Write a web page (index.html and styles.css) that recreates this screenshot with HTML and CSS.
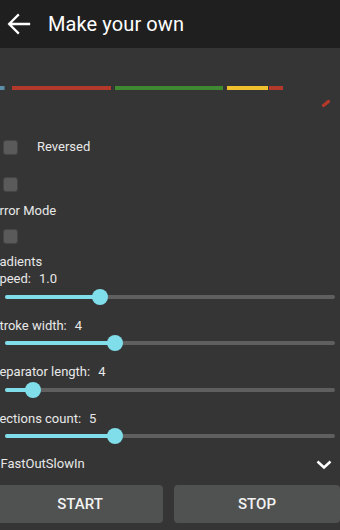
FILE: index.html
```html
<!DOCTYPE html>
<html>
<head>
<meta charset="utf-8">
<link rel="stylesheet" href="styles.css">
</head>
<body>
<div class="app">
  <header class="topbar">
    <svg class="back" width="30" height="30" viewBox="0 0 30 30"><path d="M29 24H9.5M18 15.2L9.2 24L18 32.8" fill="none" stroke="#fff" stroke-width="2.3" stroke-linecap="square" transform="translate(-3,-9)"/></svg>
    <h1 class="title">Make your own</h1>
  </header>

  <svg class="canvas" width="340" height="91" viewBox="0 0 340 91">
    <rect x="0" y="38" width="4.5" height="4" fill="#5b8fa6"/>
    <rect x="12" y="38" width="99" height="4" fill="#b5392a"/>
    <rect x="115" y="38" width="108" height="4" fill="#3f8a31"/>
    <rect x="227" y="38" width="41" height="4" fill="#f0c02e"/>
    <rect x="269" y="38" width="14" height="4" fill="#b5392a"/>
    <path d="M323.5 57.5L328.5 53.5" stroke="#b5392a" stroke-width="3.2" stroke-linecap="round"/>
  </svg>

  <div class="check-row">
    <span class="box"></span>
    <span class="check-label">Reversed</span>
  </div>
  <span class="box solo b2"></span>
  <div class="label mirror">Mirror Mode</div>
  <span class="box solo b3"></span>
  <div class="label gradients">Gradients</div>

  <div class="setting first">
    <div class="label s-label">Speed:<span class="val">1.0</span></div>
    <div class="slider"><div class="fill" style="width:28.8%"></div><span class="thumb" style="left:28.8%"></span></div>
  </div>
  <div class="setting">
    <div class="label s-label">Stroke width:<span class="val">4</span></div>
    <div class="slider"><div class="fill" style="width:33.3%"></div><span class="thumb" style="left:33.3%"></span></div>
  </div>
  <div class="setting">
    <div class="label s-label">Separator length:<span class="val">4</span></div>
    <div class="slider"><div class="fill" style="width:8.5%"></div><span class="thumb" style="left:8.5%"></span></div>
  </div>
  <div class="setting">
    <div class="label s-label">Sections count:<span class="val">5</span></div>
    <div class="slider"><div class="fill" style="width:33.3%"></div><span class="thumb" style="left:33.3%"></span></div>
  </div>

  <div class="dropdown">
    <span class="dd-text">FastOutSlowIn</span>
    <svg class="chev" width="16" height="10" viewBox="0 0 16 10"><path d="M1.5 1.5L8 7.5L14.5 1.5" fill="none" stroke="#fff" stroke-width="2.5"/></svg>
  </div>

  <div class="buttons">
    <button class="btn">START</button>
    <button class="btn">STOP</button>
  </div>
</div>
</body>
</html>
```
FILE: styles.css
```css
html, body {
  margin: 0;
  padding: 0;
  background: #353535;
  overflow: hidden;
}
body {
  width: 340px;
  height: 530px;
  font-family: Roboto, "Noto Sans", sans-serif;
  color: #e8e8e8;
}
.app {
  display: flex;
  flex-direction: column;
  width: 340px;
  height: 530px;
  overflow: hidden;
}
.topbar {
  height: 48px;
  background: #1f1f1f;
  display: flex;
  align-items: center;
  flex-shrink: 0;
}
.back {
  display: block;
  margin-left: 3px;
  margin-top: 0;
}
.title {
  margin: 0 0 0 15px;
  font-size: 20px;
  font-weight: 400;
  color: #fff;
  line-height: 24px;
  letter-spacing: 0.1px;
}
.canvas {
  display: block;
  flex-shrink: 0;
}
.check-row {
  display: flex;
  align-items: center;
  height: 16px;
  flex-shrink: 0;
}
.box {
  display: block;
  width: 13px;
  height: 13px;
  border: 1px solid #454545;
  border-radius: 3px;
  background: #5a5a5a;
  margin-left: 3px;
  flex-shrink: 0;
}
.check-label {
  margin-left: 19px;
  font-size: 13px;
  line-height: 16px;
}
.b2 { margin-top: 22px; }
.b3 { margin-top: 10.5px; }
.label {
  font-size: 13px;
  line-height: 16px;
  white-space: nowrap;
  flex-shrink: 0;
}
.mirror {
  margin-top: 10.5px;
  margin-left: -15px;
}
.gradients {
  margin-top: 10px;
  margin-left: -13.5px;
}
.setting {
  display: flex;
  flex-direction: column;
  flex-shrink: 0;
  margin-top: 11.5px;
}
.setting.first { margin-top: 1px; }
.s-label { margin-left: -8.3px; }
.val { margin-left: 8px; }
.slider {
  position: relative;
  height: 4px;
  margin: 7.5px 5px 7.5px 5px;
  background: #5f5f5f;
  border-radius: 2px;
}
.fill {
  height: 4px;
  border-radius: 2px;
  background: #80deea;
}
.thumb {
  position: absolute;
  top: 50%;
  width: 16px;
  height: 16px;
  margin: -8px 0 0 -8px;
  border-radius: 50%;
  background: #80deea;
}
.dropdown {
  display: flex;
  align-items: center;
  justify-content: space-between;
  height: 16px;
  margin-top: 10px;
  padding-right: 8px;
  flex-shrink: 0;
}
.dd-text {
  font-size: 13px;
  line-height: 16px;
  margin-left: 0.5px;
}
.chev { display: block; margin-top: 2px; }
.buttons {
  display: grid;
  grid-template-columns: 166px 166px;
  column-gap: 11px;
  margin-top: 13.5px;
  margin-left: -3px;
  flex-shrink: 0;
}
.btn {
  height: 38px;
  border: none;
  border-radius: 4px;
  background: #505251;
  color: #f2f2f2;
  font-family: Roboto, "Noto Sans", sans-serif;
  font-size: 15px;
  font-weight: 500;
  padding: 0;
}
```
